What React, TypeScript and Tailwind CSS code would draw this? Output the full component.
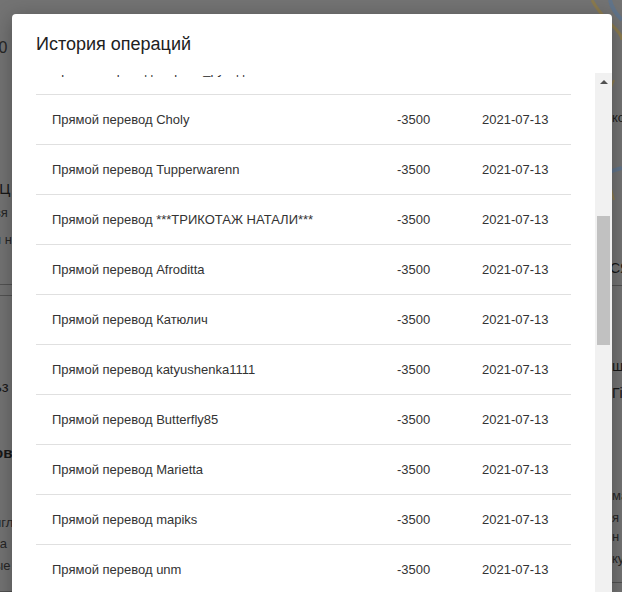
import { useLayoutEffect, useRef } from "react";

const names = [
  "Lilia_K", "Мастерица", "Bonbon", "Натали77", "Ирина_Шьёт", "Olga-craft",
  "Ксюша", "Nadezhda", "Полина_Вяжет", "Светик", "Марина_рукоделие",
  "Choly", "Tupperwarenn", "***ТРИКОТАЖ НАТАЛИ***", "Afroditta", "Катюлич",
  "katyushenka1111", "Butterfly85", "Marietta", "mapiks", "unm", "Елена", "Solnce",
];

export default function App() {
  const listRef = useRef<HTMLDivElement>(null);

  // список прокручен примерно как на скриншоте
  useLayoutEffect(() => {
    if (listRef.current) listRef.current.scrollTop = 530;
  }, []);

  return (
    <div
      className="relative h-[592px] w-[622px] overflow-hidden bg-neutral-500"
      style={{ fontFamily: '"Liberation Sans", Arial, sans-serif' }}
    >
      {/* затемнённая страница под модалкой */}
      <div className="flex h-full justify-between bg-neutral-500 text-[14px] text-neutral-900">
        <div className="w-[60px] -ml-[6px] flex flex-col">
          <span className="mt-[36px] text-[16px] text-neutral-800">:0</span>
          <span className="mt-[118px] text-[15px]">"Ц</span>
          <span className="mt-[2px] text-[13px] text-neutral-800">вя</span>
          <span className="mt-[8px] text-[13px] text-neutral-800">я н</span>
          <div className="mt-[34px] border-t border-neutral-600" />
          <div className="mt-[10px] border-t border-neutral-600" />
          <span className="mt-[80px] text-[15px]">ьз</span>
          <span className="mt-[44px] text-[15px] font-bold">ов</span>
          <span className="mt-[48px] text-[13px] text-neutral-800">игл</span>
          <span className="mt-[2px] text-[13px] text-neutral-800">та</span>
          <span className="mt-[2px] text-[13px] text-neutral-800">ые</span>
          <div className="mt-[16px] border-t border-neutral-600" />
        </div>
        <div className="w-[40px] flex flex-col bg-neutral-500">
          <svg width="40" height="250" viewBox="0 0 40 250" className="shrink-0">
            <path d="M10 0 C 20 20, 40 30, 40 40" stroke="#8a7a4f" strokeWidth="3" fill="none" />
            <path d="M28 0 C 30 10, 38 18, 40 20" stroke="#61748a" strokeWidth="4" fill="none" />
            <path d="M32 80 C 18 110, 20 160, 32 200" stroke="#8a7a4f" strokeWidth="2" fill="none" />
            <path d="M0 180 L 40 168" stroke="#61748a" strokeWidth="4" fill="none" />
            <text x="30" y="122" fontSize="13" fill="#1c1c1c">ко</text>
          </svg>
          <span className="mt-[8px] ml-[28px] text-[14px]">СЯ</span>
          <div className="mt-[6px] border-t border-neutral-600" />
          <span className="mt-[70px] ml-[30px] text-[14px]">ш</span>
          <span className="mt-[6px] ml-[30px] text-[14px]">Гi</span>
          <span className="mt-[82px] ml-[30px] text-[13px] text-neutral-800">ма</span>
          <span className="mt-[2px] ml-[30px] text-[13px] text-neutral-800">я н</span>
          <span className="mt-[2px] ml-[30px] text-[13px] text-neutral-800">ку</span>
          <div className="mt-[14px] border-t border-neutral-600" />
        </div>
      </div>

      {/* модальное окно */}
      <div className="absolute left-[12px] top-[14px] w-[600px] rounded-[4px] bg-white shadow-[0_4px_20px_rgba(0,0,0,0.3)]">
        <h2 className="px-6 pt-[18px] pb-[17px] text-[18px] leading-6 text-[#212121]">
          История операций
        </h2>
        <div className="flex h-[540px]">
          <div className="flex flex-1 flex-col">
            <div className="h-[2px] shrink-0 bg-white" />
            <div ref={listRef} className="flex-1 overflow-hidden px-6">
              {names.map((n, i) => (
                <div
                  key={i}
                  className="flex h-[50px] items-center border-b border-[#e0e0e0] text-[13px] text-[#333]"
                >
                  <div className="w-[345px] pl-4">Прямой перевод {n}</div>
                  <div className="w-[85px] pl-4">-3500</div>
                  <div className="pl-4">2021-07-13</div>
                </div>
              ))}
            </div>
          </div>
          {/* полоса прокрутки */}
          <div className="flex w-[17px] flex-col bg-[#f1f1f1]">
            <div className="flex h-[17px] items-center justify-center">
              <div className="h-0 w-0 border-x-[4px] border-b-[4px] border-x-transparent border-b-[#505050]" />
            </div>
            <div className="mx-[2px] mt-[126px] h-[129px] bg-[#c1c1c1]" />
          </div>
        </div>
      </div>
    </div>
  );
}
